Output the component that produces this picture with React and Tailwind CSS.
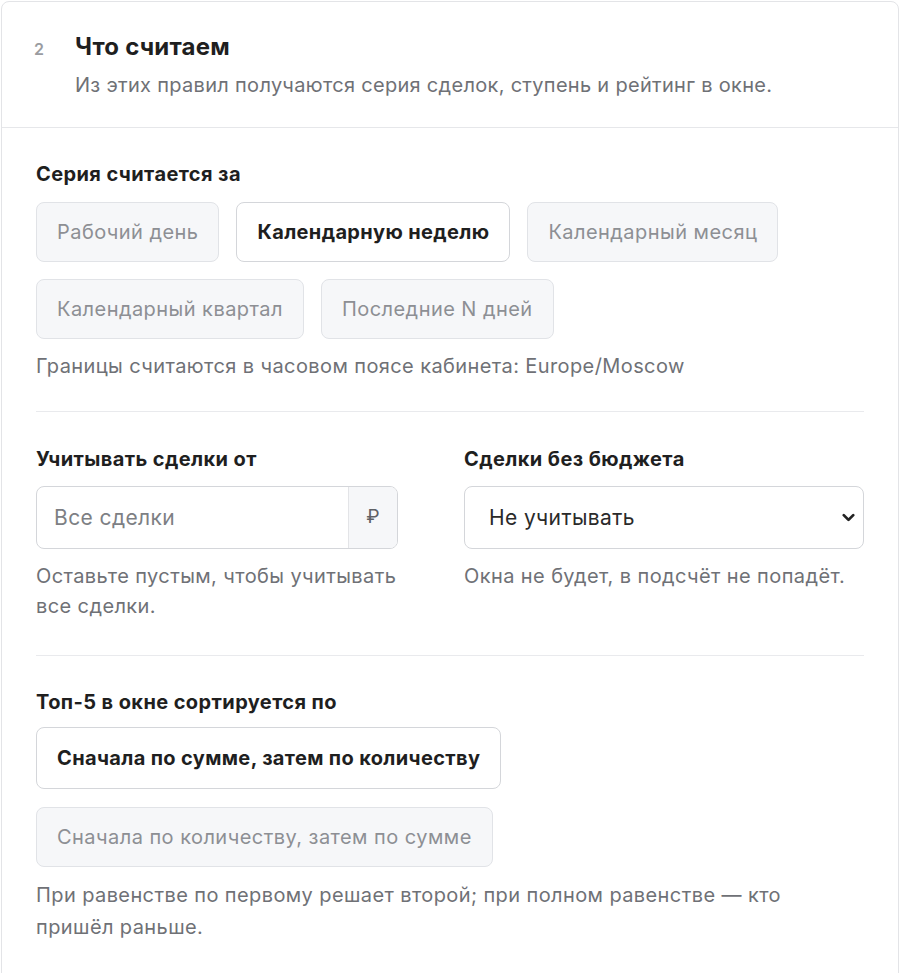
import { ChevronDown } from 'lucide-react';

const periods = [
  { label: 'Рабочий день' },
  { label: 'Календарную неделю', active: true },
  { label: 'Календарный месяц' },
  { label: 'Календарный квартал' },
  { label: 'Последние N дней' },
];

const sortModes = [
  { label: 'Сначала по сумме, затем по количеству', active: true },
  { label: 'Сначала по количеству, затем по сумме' },
];

function Choice({ label, active, tall }) {
  return (
    <button
      type="button"
      className={
        'rounded-lg border px-5 text-[20px] ' +
        (tall ? 'h-[62px] ' : 'h-[60px] ') +
        (active
          ? 'border-[#d4d6da] bg-white font-bold tracking-[0.35px] text-[#1f1f1f]'
          : 'border-[#e1e3e7] bg-[#f6f7f9] tracking-[0.45px] text-[#8d8f94]')
      }
    >
      {label}
    </button>
  );
}

export default function App() {
  return (
    <div className="min-h-screen bg-white p-px font-['Inter',sans-serif] text-[#1f1f1f]">
      <section className="rounded-lg border border-[#e3e4e7] bg-white pb-12">
        <header className="flex gap-[31px] border-b border-[#e6e7ea] px-[32px] pt-[30px] pb-[29px]">
          <span className="pt-[5px] text-[16px] font-semibold text-[#9a9ca1]">2</span>
          <div>
            <h2 className="text-[24px] font-bold leading-[30px] tracking-[0.2px]">Что считаем</h2>
            <p className="mt-[10px] text-[20px] leading-[26px] tracking-[0.3px] text-[#6f7176]">
              Из этих правил получаются серия сделок, ступень и рейтинг в окне.
            </p>
          </div>
        </header>

        <div className="px-[34px]">
          <div className="border-b border-[#e9eaed] pt-[33px] pb-[32px]">
            <h3 className="text-[20px] font-bold leading-[26px] tracking-[0.4px]">Серия считается за</h3>
            <div className="mt-[15px] flex flex-wrap gap-x-[17px] gap-y-[17px]">
              {periods.map((p) => (
                <Choice key={p.label} {...p} />
              ))}
            </div>
            <p className="mt-[14px] text-[20px] leading-[26px] tracking-[0.4px] text-[#6f7176]">
              Границы считаются в часовом поясе кабинета: Europe/Moscow
            </p>
          </div>

          <div className="grid grid-cols-2 gap-x-[28px] border-b border-[#e9eaed] pt-[34px] pb-[34px]">
            <div>
              <h3 className="text-[20px] font-bold leading-[26px] tracking-[0.4px]">Учитывать сделки от</h3>
              <div className="mt-[14px] flex h-[63px] w-[362px] overflow-hidden rounded-lg border border-[#d4d6da]">
                <input
                  type="text"
                  placeholder="Все сделки"
                  className="min-w-0 flex-1 px-[17px] text-[21px] tracking-[0.4px] outline-none placeholder:text-[#7d7f84]"
                />
                <span className="flex w-[49px] items-center justify-center border-l border-[#e3e4e7] bg-[#f6f7f9] text-[19px] text-[#5f6166]">
                  ₽
                </span>
              </div>
              <p className="mt-[12px] text-[20px] leading-[30px] tracking-[0.4px] text-[#6f7176]">
                Оставьте пустым, чтобы учитывать все сделки.
              </p>
            </div>
            <div>
              <h3 className="text-[20px] font-bold leading-[26px] tracking-[0.4px]">Сделки без бюджета</h3>
              <div className="relative mt-[14px] flex h-[63px] items-center rounded-lg border border-[#d4d6da] px-[24px]">
                <span className="text-[21px] tracking-[0.4px] text-[#2a2a2a]">Не учитывать</span>
                <ChevronDown className="absolute right-[5px] h-[19px] w-[19px] text-[#222]" strokeWidth={3.5} />
              </div>
              <p className="mt-[12px] text-[20px] leading-[30px] tracking-[0.4px] text-[#6f7176]">
                Окна не будет, в подсчёт не попадёт.
              </p>
            </div>
          </div>

          <div className="pt-[33px]">
            <h3 className="text-[20px] font-bold leading-[26px] tracking-[0.4px]">Топ-5 в окне сортируется по</h3>
            <div className="mt-[12px] flex flex-col items-start gap-[18px]">
              {sortModes.map((s) => (
                <Choice key={s.label} {...s} tall={s.active} />
              ))}
            </div>
            <p className="mt-[12px] max-w-[770px] text-[20px] leading-[32px] tracking-[0.4px] text-[#6f7176]">
              При равенстве по первому решает второй; при полном равенстве — кто пришёл раньше.
            </p>
          </div>
        </div>
      </section>
    </div>
  );
}
